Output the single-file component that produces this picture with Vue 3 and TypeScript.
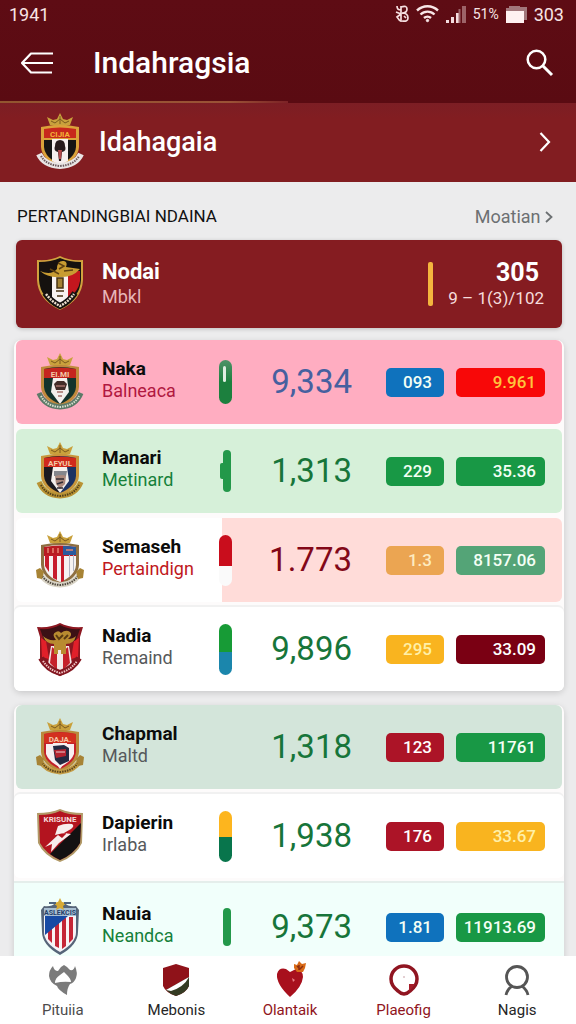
<script setup lang="ts">
type CrestKind = 'feature' | 'crowned' | 'horns' | 'slash' | 'star'

interface Crest {
  kind: CrestKind
  label?: string
  rim?: string
  band?: string
  left?: string
  right?: string
  ribbon?: string
  ribbonInk?: string
  emblem?: 'torch' | 'face' | 'portrait' | 'stripes' | 'helmet'
}

interface Row {
  name: string
  place: string
  placeTone: string
  row: string
  pill: string
  value: string
  valueTone: string
  small: string
  smallTone: string
  large: string
  largeTone: string
  crest: Crest
}

const headerCrest: Crest = {
  kind: 'crowned', label: 'CIJIA', rim: '#dba23a', band: '#c8281c', left: '#161414', right: '#161414',
  ribbon: '#e9e4e4', ribbonInk: '#6b5a5e', emblem: 'torch',
}

const groups: Row[][] = [
  [
    {
      name: 'Naka', place: 'Balneaca', placeTone: 'crimson', row: 'pink', pill: 'glass',
      value: '9,334', valueTone: 'blue', small: '093', smallTone: 'b-blue', large: '9.961', largeTone: 'b-red',
      crest: { kind: 'crowned', label: 'EI.MI', rim: '#c08a3c', band: '#c4251f', left: '#14332c', right: '#14332c', ribbon: '#5d7a68', ribbonInk: '#d9e0d0', emblem: 'face' },
    },
    {
      name: 'Manari', place: 'Metinard', placeTone: 'green', row: 'mint', pill: 'notch',
      value: '1,313', valueTone: 'green', small: '229', smallTone: 'b-green', large: '35.36', largeTone: 'b-green',
      crest: { kind: 'crowned', label: 'AFYUL', rim: '#c9963c', band: '#d02a1c', left: '#1c1a20', right: '#1d3262', ribbon: '#b99335', ribbonInk: '#54401a', emblem: 'portrait' },
    },
    {
      name: 'Semaseh', place: 'Pertaindign', placeTone: 'red', row: 'half', pill: 'redwhite',
      value: '1.773', valueTone: 'maroon', small: '1.3', smallTone: 'b-peach', large: '8157.06', largeTone: 'b-sage',
      crest: { kind: 'crowned', label: '', rim: '#8e6f42', band: '#b81c22', left: '#f6f2f2', right: '#f6f2f2', ribbon: '#d9d4c6', ribbonInk: '#4d463c', emblem: 'stripes' },
    },
    {
      name: 'Nadia', place: 'Remaind', placeTone: 'grey', row: 'plain', pill: 'greenteal',
      value: '9,896', valueTone: 'green', small: '295', smallTone: 'b-amber', large: '33.09', largeTone: 'b-maroon',
      crest: { kind: 'horns' },
    },
  ],
  [
    {
      name: 'Chapmal', place: 'Maltd', placeTone: 'grey', row: 'sage', pill: 'none',
      value: '1,318', valueTone: 'green', small: '123', smallTone: 'b-crimson', large: '11761', largeTone: 'b-green',
      crest: { kind: 'crowned', label: 'DAJA.', rim: '#b98a3c', band: '#d3301f', left: '#c3202a', right: '#c3202a', ribbon: '#c39b45', ribbonInk: '#5b451d', emblem: 'helmet' },
    },
    {
      name: 'Dapierin', place: 'Irlaba', placeTone: 'grey', row: 'plain', pill: 'ambergreen',
      value: '1,938', valueTone: 'green', small: '176', smallTone: 'b-crimson', large: '33.67', largeTone: 'b-amber',
      crest: { kind: 'slash' },
    },
    {
      name: 'Nauia', place: 'Neandca', placeTone: 'green', row: 'ice', pill: 'thin',
      value: '9,373', valueTone: 'green', small: '1.81', smallTone: 'b-blue', large: '11913.69', largeTone: 'b-green',
      crest: { kind: 'star' },
    },
  ],
]

const tabs = [
  { id: 'home', label: 'Pituiia', tone: 'grey' },
  { id: 'club', label: 'Mebonis', tone: 'dark' },
  { id: 'heart', label: 'Olantaik', tone: 'red' },
  { id: 'ring', label: 'Plaeofig', tone: 'red' },
  { id: 'user', label: 'Nagis', tone: 'dark' },
]
</script>

<template>
  <div class="screen">
    <header class="top">
      <div class="status">
        <span>1941</span>
        <div class="status-icons">
          <svg width="14" height="20" viewBox="0 0 14 20" fill="none" stroke="#f6dfe0" stroke-width="1.7">
            <path d="M2 2q0 4 4 4M1 8l5 2-4 3 3 4M6 2v16M6 3q6-2 6 2 0 4-5 4 6 0 6 5 0 4-6 3M9 12l2 2" />
          </svg>
          <svg width="23" height="18" viewBox="0 0 23 18" fill="none" stroke="#f8e6e7" stroke-width="2.4">
            <path d="M1 5.500C7-.1 16-.1 22 5.500M4.500 9.500c4-3.800 10-3.800 14 0M8 13c2-1.800 5-1.800 7 0" />
            <circle cx="11.500" cy="15.500" r="1.200" fill="#f8e6e7" stroke-width="1" />
          </svg>
          <svg width="20" height="18" viewBox="0 0 20 18">
            <path fill="#f4dcde" d="M0 15h3v3H0zM5 12h3v6H5zM10 8h3v10h-3z" />
            <path fill="#9d6368" d="M12.500 4h2v14h-2zM16 1h4v17h-4z" />
          </svg>
          <span class="pct">51%</span>
          <svg width="21" height="17" viewBox="0 0 21 17">
            <path fill="#a2777b" d="M0 2h3V0h11v1h7v13h-3v3H0z" />
            <path fill="#fff1f1" d="M0 5h18v12H0z" />
          </svg>
          <span>303</span>
        </div>
      </div>
      <div class="bar">
        <button class="icon-btn" type="button" aria-label="Back">
          <svg width="34" height="24" viewBox="0 0 34 24" fill="none" stroke="#fff" stroke-width="2.200" stroke-linejoin="round">
            <path d="M33 2.500H11L2 12l9 9.500h21M2 12h31" />
          </svg>
        </button>
        <h1>Indahragsia</h1>
        <button class="icon-btn" type="button" aria-label="Search">
          <svg width="28" height="28" viewBox="0 0 28 28" fill="none" stroke="#fff" stroke-width="2.500">
            <circle cx="10.500" cy="10.500" r="8.800" />
            <path d="M17 17l9 9" stroke-width="3" />
          </svg>
        </button>
      </div>
      <div class="rule"></div>
    </header>

    <a class="club" href="#club">
      <svg class="crest" viewBox="0 0 48 58">
        <use href="#crest-crown" />
        <path d="M5 14q19-4 38 0v20q-1 13-19 20Q6 47 5 34z" :fill="headerCrest.rim" />
        <path d="M8 27h32v7q-1 11-16 17Q9 45 8 34z" :fill="headerCrest.left" />
        <path d="M16 26h16v22l-8 4-8-4z" fill="#f6eeee" />
        <path d="M8 16q16-3 32 0v9H8z" :fill="headerCrest.band" />
        <text x="24" y="24" class="crest-label gold">{{ headerCrest.label }}</text>
        <path d="M19 33q0-6 5-6t5 6q2 5-3 6l-1 9h-2l-1-9q-5-1-3-6z" fill="#26191b" />
        <path d="M22 37h4l-1 9h-2z" fill="#b4484a" />
        <path d="M3 41q5 11 21 12 16-1 21-12" fill="none" :stroke="headerCrest.ribbon" stroke-width="6" />
        <path d="M5 43q5 9 19 10 14-1 19-10" fill="none" :stroke="headerCrest.ribbonInk" stroke-width="2" stroke-dasharray="1.500 1" />
      </svg>
      <span class="club-name">Idahagaia</span>
      <svg width="12" height="22" viewBox="0 0 12 22" fill="none" stroke="#fff" stroke-width="2.200">
        <path d="M1.500 2L10 11l-8.500 9" />
      </svg>
    </a>

    <main>
      <div class="section-head">
        <h2>PERTANDINGBIAI NDAINA</h2>
        <a href="#all">Moatian
          <svg width="8" height="12" viewBox="0 0 8 12" fill="none" stroke="#6c7072" stroke-width="1.800"><path d="M1 1l5.500 5L1 11" /></svg>
        </a>
      </div>

      <section class="feature">
        <svg class="crest" viewBox="0 0 48 58">
          <path d="M1 5q14 1 23-4 9 5 23 4v20q-1 20-23 30Q2 45 1 25z" fill="#d0a23e" />
          <path d="M3 7q12 0 21-4 9 4 21 4v18q-1 18-21 28Q4 43 3 25z" fill="#15110f" />
          <path d="M16 20h16v28l-8 5-8-5z" fill="#f8f2f0" />
          <path d="M32 16h12v10q-1 9-12 19z" fill="#c4161e" />
          <path d="M4 16q11 5 17-2 0-9 7-8 4 1 2 6l14 2q-8 9-20 8Q12 23 4 16z" fill="#c89c32" />
          <path d="M14 14l9 5M22 8l6 3-5 3M28 16l9-1" stroke="#5f4212" stroke-width="1.500" fill="none" />
          <path d="M21 23h6v10h-6zM20 36h8M21 41h6" fill="#a38133" stroke="#483313" stroke-width="1.500" />
          <path d="M9 38q6 9 15 13 9-4 15-13" fill="none" stroke="#15110f" stroke-width="6" />
          <path d="M10 39q6 8 14 12 8-4 14-12" fill="none" stroke="#eee1cf" stroke-width="2.500" stroke-dasharray="2 1" />
        </svg>
        <div class="who">
          <strong>Nodai</strong>
          <span>Mbkl</span>
        </div>
        <i class="marker"></i>
        <div class="score">
          <strong>305</strong>
          <span>9 – 1(3)/102</span>
        </div>
      </section>

      <ul v-for="(rows, g) in groups" :key="g" class="group">
        <li v-for="r in rows" :key="r.name" :class="['row', r.row]">
          <svg class="crest" viewBox="0 0 48 58">
            <template v-if="r.crest.kind === 'crowned'">
              <use href="#crest-crown" />
              <path d="M5 14q19-4 38 0v20q-1 13-19 20Q6 47 5 34z" :fill="r.crest.rim" />
              <path d="M8 16q8-2 16-2v37Q9 45 8 34z" :fill="r.crest.left" />
              <path d="M24 14q8 0 16 2v18q-1 11-16 17z" :fill="r.crest.right" />
              <path v-if="r.crest.emblem !== 'stripes'" d="M17 25h14l2 14-9 12-9-12z" fill="#f4efec" />
              <path d="M8 16q16-3 32 0v9H8z" :fill="r.crest.band" />
              <text x="24" y="24" class="crest-label">{{ r.crest.label }}</text>
              <g v-if="r.crest.emblem === 'face'">
                <path d="M18 31l3-3h7l3 3-2 6H20z" fill="#432c28" />
                <path d="M20 33h9M21 39h6M22 43h4" stroke="#a7726b" stroke-width="1.500" />
              </g>
              <g v-if="r.crest.emblem === 'portrait'">
                <path d="M18 29h13l-1 5H18z" fill="#85868c" />
                <path d="M19 34q8-2 11 0l-1 8-5 5-4-5z" fill="#ac8a7e" />
                <path d="M20 37h8M21 42l6-2M21 46h6" stroke="#302c34" stroke-width="1.500" />
              </g>
              <g v-if="r.crest.emblem === 'stripes'">
                <path d="M9 24h4v17l-4-6zM17 24h4v25l-4-2zM25 24h3v26l-3 1z" fill="#c71c2c" />
                <path d="M33 24h1v22h-1zM37 24h1v16h-1z" fill="#b2b5c2" />
                <path d="M27 15q8 0 13 1v8H27z" fill="#2a5a9e" />
                <path d="M12 17v5M17 17v5M22 17v5M30 19h7" stroke="#e48470" stroke-width="1.500" />
              </g>
              <g v-if="r.crest.emblem === 'helmet'">
                <path d="M10 26h28v10q-3 8-14 13-11-5-14-13z" fill="#f7eef0" />
                <path d="M17 28l11-1 5 3v13l-9 4-5-5z" fill="#232941" />
                <path d="M18 32l12-1v7l-10 2z" fill="#b32330" />
                <path d="M20 34h9" stroke="#ead1d2" stroke-width="1" />
              </g>
              <path d="M3 40q5 13 21 14 16-1 21-14" fill="none" :stroke="r.crest.ribbon" stroke-width="5" />
              <path d="M5 43q5 10 19 11 14-1 19-11" fill="none" :stroke="r.crest.ribbonInk" stroke-width="2" stroke-dasharray="1.500 1" />
              <path v-if="r.crest.emblem === 'stripes' || r.crest.emblem === 'helmet'" d="M0 39l4-2 4 4-2 7-5-1zM48 39l-4-2-4 4 2 7 5-1z" fill="#a78335" />
            </template>

            <template v-else-if="r.crest.kind === 'horns'">
              <path d="M1 7q14 1 23-4 9 5 23 4l-3 10v24q-5 9-20 15Q9 50 4 41V17z" fill="#8c1720" />
              <path d="M5 18l5 3 3 18-7-2zM43 18l-5 3-3 18 7-2z" fill="#e1202a" />
              <path d="M15 26h18l3 18-12 9-12-9z" fill="#f4e8e8" />
              <path d="M16 27l5 4v19l-7-7zM32 27l-5 4v19l7-7z" fill="#c51f2a" />
              <path d="M4 9q11 1 20-4 9 5 20 4l-4 11-9 4H17l-9-4z" fill="#3b1115" />
              <path d="M7 16q5 5 13 4-5-6 0-8 3-2 5 1 5-4 9-1 3 3-2 7 5 0 8-3-2 8-10 8v10h-5v-4h-3v4h-4V24q-8 0-11-8z" fill="#b98b30" />
              <path d="M20 15l3 4 4-4M32 15l-4 4" stroke="#5b3b12" stroke-width="2" fill="none" />
              <path d="M5 38q6 11 19 15 13-4 19-15" fill="none" stroke="#841721" stroke-width="6" />
              <path d="M7 41q6 9 17 12 11-3 17-12" fill="none" stroke="#f0c7c7" stroke-width="2" stroke-dasharray="1.500 1" />
            </template>

            <template v-else-if="r.crest.kind === 'slash'">
              <path d="M1 6q14 0 23-4 9 4 23 4l-1 30q-6 13-22 19Q8 49 2 36z" fill="#b29a68" />
              <path d="M3 8q13 0 21-4 8 4 21 4l-1 28q-6 11-20 17Q10 47 4 36z" fill="#b3141f" />
              <path d="M45 16l-1 20q-6 11-20 17-6-3-10-6z" fill="#131112" />
              <text x="24" y="15" class="crest-label white">KRISUNE</text>
              <path d="M22 19q7-3 14-2 3 2-1 5l-7 4 7 1-12 9-8 9 1-8-7 3 13-12 4 3 5-5q-5 0-12 2z" fill="#f7eded" />
            </template>

            <template v-else>
              <path d="M8 8q8 1 11-3h10q3 4 11 3l3 4-1 22q0 13-18 23Q6 47 6 34L5 12z" fill="#566579" />
              <path d="M8 14h32v20q0 11-16 20Q8 45 8 34z" fill="#f5f3f7" />
              <path d="M10 36V22h28v14q-1 8-14 15-12-6-14-15z" fill="#f9f3f3" />
              <path d="M12 30h4v15l-4-4zM19 24h4v26l-4-2zM26 20h4v28l-4 3zM33 19h4v22l-4 4z" fill="#c52536" />
              <path d="M9 18h23L9 37z" fill="#174aa4" />
              <path d="M8 10h32v8H8z" fill="#a8bfd2" />
              <text x="24" y="17" class="crest-label navy">ASLEKCIS</text>
              <path d="M24 0l2 4 5 1-4 3 1 4-4-2-4 2 1-4-4-3 5-1z" fill="#d7aa35" />
              <path d="M13 5h7M28 5h7" stroke="#50647e" stroke-width="2" />
            </template>
          </svg>
          <div class="who">
            <strong>{{ r.name }}</strong>
            <span :class="r.placeTone">{{ r.place }}</span>
          </div>
          <i :class="['pill', r.pill]"></i>
          <span :class="['value', r.valueTone]">{{ r.value }}</span>
          <span :class="['badge', 'first', r.smallTone]">{{ r.small }}</span>
          <span :class="['badge', r.largeTone]">{{ r.large }}</span>
        </li>
      </ul>
    </main>

    <nav>
      <a v-for="t in tabs" :key="t.id" :href="'#' + t.id" :class="['tab', 't-' + t.tone]">
        <svg width="36" height="40" viewBox="0 0 36 40">
          <g v-if="t.id === 'home'">
            <path d="M8 5q1 5 5 5l3-4 3-2 3 2 3 3q4 1 5-4 3 7 1 12-2 5-6 6-3 4-3 11-9-5-10-9-7-3-8-10Q4 9 8 5z" fill="#7b7b7b" />
            <path d="M10 22q0-5 5-8l4-3 3 3q4 4 4 7-8-1-16 1z" fill="#fff" />
          </g>
          <g v-if="t.id === 'club'">
            <path d="M5 7l13-4 13 4v18q-3 7-13 10Q8 32 5 25z" fill="#8f1219" />
            <path d="M31 16v9q-3 7-13 10-6-2-10-6z" fill="#343b23" />
            <path d="M8 29l23-13q-5 10-18 14z" fill="#fff" />
          </g>
          <g v-if="t.id === 'heart'">
            <path d="M18 36Q4 23 5 13q2-7 9-5l4 3 6-3q7 1 7 8-1 10-13 20z" fill="#a8101d" />
            <path d="M22 3l3 1 2-4 3 3 4-1-1 5-2 4h-6l-3-4z" fill="#d86a17" />
            <path d="M25 5l3 3 3-3M27 4v5" stroke="#8b2d10" stroke-width="1.500" fill="none" />
            <path d="M20 17l3 2-2 2z" fill="#e77c83" />
          </g>
          <g v-if="t.id === 'ring'">
            <path d="M18 5a13 13 0 0 1 13 13c0 5-3 9-7 12-4 4-8 4-12 0-4-3-7-7-7-12A13 13 0 0 1 18 5z" fill="none" stroke="#901521" stroke-width="3.500" />
            <path d="M23 23h6l-6 8z" fill="#a51c28" />
            <circle cx="18" cy="16" r="1" fill="#dabfc3" />
          </g>
          <g v-if="t.id === 'user'" fill="none" stroke="#555" stroke-width="2.800">
            <circle cx="18" cy="16" r="10.500" />
            <path d="M7 34q1-5 6-9M29 34q-1-5-6-9" />
          </g>
        </svg>
        <span>{{ t.label }}</span>
      </a>
    </nav>

    <svg class="defs" width="0" height="0" aria-hidden="true">
      <defs>
        <g id="crest-crown">
          <path d="M11 4l6 3 4-1 3-6 3 6 4 1 6-3-3 8q-10 3-20 0z" fill="#c9a13c" />
          <path d="M15 8l4 2 5-4 5 4 4-2M24 3v8" stroke="#7c5a1e" stroke-width="1" fill="none" />
        </g>
      </defs>
    </svg>
  </div>
</template>

<style>
body {
  margin: 0;
  background: #ececed;
}
</style>

<style scoped>
.screen {
  display: flex;
  flex-direction: column;
  height: 100vh;
  overflow: hidden;
  background: #ececed;
  color: #0c0c0c;
  font-family: Roboto, "Liberation Sans", sans-serif;
}
h1, h2, ul { margin: 0; padding: 0; }
a { color: inherit; text-decoration: none; }
.defs { position: absolute; }

.top {
  flex: none;
  background: linear-gradient(#5e0c14, #5a0b12);
  color: #fff;
}
.status {
  display: flex;
  justify-content: space-between;
  align-items: center;
  height: 28px;
  padding: 0 12px 0 9px;
  font-size: 18px;
  color: #f8e4e5;
}
.status-icons { display: flex; align-items: center; gap: 7px; }
.pct { font-size: 14px; }
.bar {
  display: flex;
  align-items: center;
  height: 73px;
  padding: 0 22px 4px 20px;
  box-sizing: border-box;
}
.bar h1 {
  flex: 1;
  margin-left: 39px;
  font-size: 30px;
  line-height: 36px;
  font-weight: 500;
}
.icon-btn {
  display: flex;
  padding: 0;
  border: 0;
  background: none;
  cursor: pointer;
}
.rule { width: 50%; height: 2px; background: linear-gradient(90deg, #92552f, #9a5236 80%, #7c2226); }

.club {
  flex: none;
  display: flex;
  align-items: center;
  height: 79px;
  padding: 0 25px 2px 36px;
  box-sizing: border-box;
  background: linear-gradient(#7c1e24, #821d21 20%, #821d21);
  color: #fff;
}
.club-name {
  flex: 1;
  margin-left: 15px;
  font-size: 27px;
  font-weight: 500;
}
.crest { width: 48px; height: 58px; display: block; flex: none; }
.crest-label {
  font: 700 8px Roboto, sans-serif;
  text-anchor: middle;
  fill: #f3c9a8;
}
.crest-label.gold { fill: #f4b43a; }
.crest-label.white { fill: #f6dada; }
.crest-label.navy { font-size: 7px; fill: #25406a; }

main {
  flex: 1;
  min-height: 0;
  overflow-y: auto;
  scrollbar-width: none;
  padding: 0 12px 0 14px;
}
.section-head {
  display: flex;
  justify-content: space-between;
  align-items: center;
  height: 58px;
  padding: 10px 11px 0 3px;
  box-sizing: border-box;
}
h2 { font-size: 17px; font-weight: 400; line-height: 24px; color: #111; }
.section-head a { font-size: 18px; color: #6c7072; }

.feature {
  display: flex;
  align-items: center;
  height: 88px;
  margin: 0 2px 12px;
  padding: 0 18px 0 20px;
  box-sizing: border-box;
  border-radius: 6px;
  background: #851c21;
  box-shadow: 0 1px 4px #0003;
  color: #fff;
}
.who { display: flex; flex-direction: column; min-width: 0; padding-bottom: 4px; }
.who strong { font-size: 19px; line-height: 22px; font-weight: 700; }
.who span { font-size: 18px; line-height: 22px; }
.feature .who { flex: 1; margin-left: 18px; padding: 0; }
.feature .who strong { font-size: 22px; line-height: 26px; font-weight: 700; }
.feature .who span { line-height: 24px; color: #e7b5b7; }
.marker { width: 5px; height: 44px; border-radius: 2px; background: #f4b53e; }
.score { display: flex; flex-direction: column; align-items: flex-end; width: 111px; }
.score strong { margin-right: 5px; font-size: 25px; line-height: 28px; }
.score span { font-size: 17px; line-height: 22px; color: #f6dcdc; white-space: nowrap; }

.group {
  display: flex;
  flex-direction: column;
  gap: 5px;
  margin-bottom: 14px;
  padding: 0 2px;
  border-radius: 7px;
  background: #fdfbfb;
  box-shadow: 0 2px 6px #00000026;
  list-style: none;
}
.row {
  display: grid;
  grid-template-columns: 48px 1fr 14px 119px 92px 101px;
  align-items: center;
  height: 84px;
  padding: 0 17px 0 20px;
  box-sizing: border-box;
  border-radius: 6px;
}
.row .who { margin-left: 18px; }
.pink { background: #ffadc1; }
.mint { background: #d6f0d9; }
.half { background: linear-gradient(to left, #ffdcd9 340px, #fff 340px); }
.sage { background: #d3e5da; }
.plain, .ice {
  margin: 0 -2px;
  padding: 0 19px 0 22px;
  background: #fff;
  box-shadow: 0 -2px 0 #f1f1f1;
}
.ice { height: 88px; background: #f1fffb; border-radius: 0; box-shadow: 0 -2px 0 #e5eeeb; }

.crimson { color: #b01840; }
.green { color: #16803a; }
.red { color: #c01820; }
.grey { color: #56595b; }
.blue { color: #46609f; }
.maroon { color: #830818; }

.pill { width: 13px; height: 51px; border-radius: 7px; }
.glass { height: 44px; background: linear-gradient(#4e9268, #1c803e 50%); position: relative; }
.glass::after {
  content: "";
  position: absolute;
  top: 6px;
  left: 4px;
  width: 3px;
  height: 16px;
  border-radius: 2px;
  background: #dfeee2;
}
.notch, .thin { width: 8px; height: 38px; margin-left: 4px; background: #23984a; }
.notch { height: 42px; position: relative; }
.notch::before {
  content: "";
  position: absolute;
  top: 13px;
  left: -3px;
  width: 6px;
  height: 16px;
  border-radius: 2px;
  background: #23984a;
}
.redwhite { background: linear-gradient(#c90d1c 60%, #fafafa 60%); }
.greenteal { background: linear-gradient(#179b36 54%, #1b86ac 54%); }
.ambergreen { background: linear-gradient(#fdb51e 51%, #08754c 51%); }
.none { visibility: hidden; }

.value {
  justify-self: end;
  font-size: 33px;
  line-height: 40px;
}
.value.green { color: #17753a; }
.badge {
  justify-self: end;
  width: 89px;
  height: 29px;
  padding-right: 9px;
  box-sizing: border-box;
  border-radius: 5px;
  font-size: 17px;
  line-height: 29px;
  font-weight: 500;
  text-align: right;
  color: #f4fff5;
}
.first { width: 58px; padding-right: 12px; }
.b-blue { background: #0f72bd; }
.b-red { background: #f80808; color: #ffc43d; }
.b-green { background: #189845; }
.b-peach { background: #eba552; color: #fdebc0; }
.b-sage { background: #54a477; }
.b-amber { background: #f9b41f; color: #fff0a8; }
.b-maroon { background: #7a0013; color: #fff; }
.b-crimson { background: #ac1427; color: #fff; }

nav {
  flex: none;
  display: grid;
  grid-template-columns: repeat(5, 1fr);
  height: 68px;
  padding: 0 2px 0 6px;
  box-sizing: border-box;
  background: #fff;
}
.tab {
  display: flex;
  flex-direction: column;
  align-items: center;
  padding-top: 5px;
  font-size: 15px;
  line-height: 18px;
}
.t-grey { color: #4c4c4c; }
.t-dark { color: #252525; }
.t-red { color: #901521; }
</style>
